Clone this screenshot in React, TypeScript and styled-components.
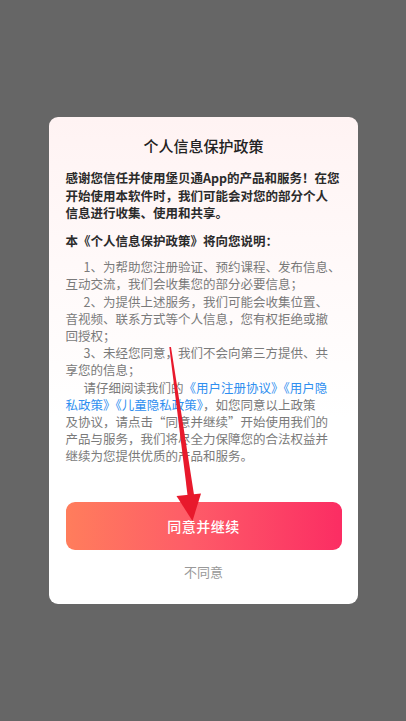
import React from 'react';
import styled, { createGlobalStyle } from 'styled-components';

const GlobalStyle = createGlobalStyle`
  html, body, #root {
    height: 100%;
    margin: 0;
    padding: 0;
  }
  body {
    background: #666666;
    font-family: "Noto Sans CJK SC", "Noto Sans", sans-serif;
  }
`;

const Screen = styled.div`
  position: relative;
  height: 100%;
  display: flex;
  align-items: center;
  justify-content: center;
`;

const Dialog = styled.div`
  width: 309px;
  box-sizing: border-box;
  padding: 18px 16px 20px 17px;
  border-radius: 9px;
  background: linear-gradient(180deg, #fff3f3 0%, #fffafa 35%, #ffffff 62%);
  display: flex;
  flex-direction: column;
`;

const Title = styled.h2`
  margin: 0;
  text-align: center;
  font-size: 15px;
  line-height: 22px;
  font-weight: 500;
  color: #222;
`;

const Lead = styled.p<{ $gap: number }>`
  margin: ${p => p.$gap}px 0 0;
  font-size: 12.5px;
  line-height: 17.4px;
  font-weight: 700;
  color: #2b2b2b;
  white-space: nowrap;
`;

const Body = styled.div`
  margin-top: 9px;
  font-size: 12.5px;
  line-height: 17.2px;
  color: #7a7a7a;
  white-space: nowrap;
`;

const Item = styled.p`
  margin: 0;
  text-indent: 18px;
`;

const Link = styled.span`
  color: #2f8ff0;
`;

const Agree = styled.button`
  margin-top: 37px;
  height: 48px;
  border: none;
  border-radius: 9px;
  background: linear-gradient(90deg, #ff7d5c 0%, #fe5c68 45%, #fb2d63 100%);
  color: #ffffff;
  font-family: inherit;
  font-size: 14px;
  font-weight: 500;
  letter-spacing: 0.5px;
`;

const Decline = styled.button`
  margin-top: 10px;
  height: 24px;
  border: none;
  background: none;
  color: #999999;
  font-family: inherit;
  font-size: 13px;
`;

const Pointer = styled.svg`
  position: absolute;
  left: 0;
  top: 0;
  width: 406px;
  height: 721px;
  pointer-events: none;
`;

const App: React.FC = () => {
  return (
    <Screen>
      <GlobalStyle />
      <Dialog>
        <Title>个人信息保护政策</Title>
        <Lead $gap={12}>
          感谢您信任并使用堡贝通App的产品和服务！在您<br />
          开始使用本软件时，我们可能会对您的部分个人<br />
          信息进行收集、使用和共享。
        </Lead>
        <Lead $gap={10}>本《个人信息保护政策》将向您说明：</Lead>
        <Body>
          <Item>
            1、为帮助您注册验证、预约课程、发布信息、<br />
            互动交流，我们会收集您的部分必要信息；
          </Item>
          <Item>
            2、为提供上述服务，我们可能会收集位置、<br />
            音视频、联系方式等个人信息，您有权拒绝或撤<br />
            回授权；
          </Item>
          <Item>
            3、未经您同意，我们不会向第三方提供、共<br />
            享您的信息；
          </Item>
          <Item>
            请仔细阅读我们的<Link>《用户注册协议》《用户隐<br />
            私政策》《儿童隐私政策》</Link>，如您同意以上政策<br />
            及协议，请点击“同意并继续”开始使用我们的<br />
            产品与服务，我们将尽全力保障您的合法权益并<br />
            继续为您提供优质的产品和服务。
          </Item>
        </Body>
        <Agree>同意并继续</Agree>
        <Decline>不同意</Decline>
      </Dialog>
      <Pointer viewBox="0 0 406 721">
        <polygon points="169.3,347 171,347 194.5,498 188,499" fill="#e8192c" />
        <polygon points="176.5,496 201,493.5 192.5,521" fill="#e8192c" />
      </Pointer>
    </Screen>
  );
};

export default App;
